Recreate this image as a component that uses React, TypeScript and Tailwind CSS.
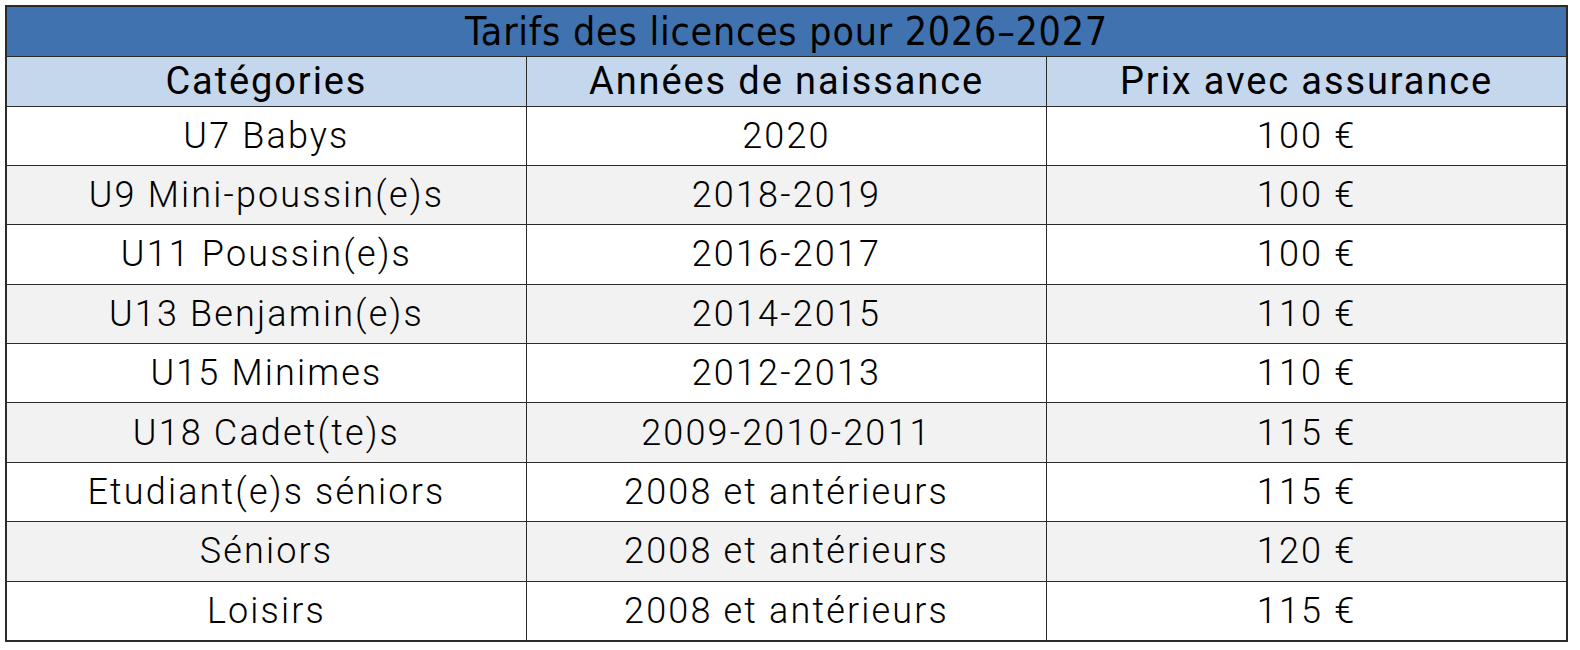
import React from 'react';

interface Row {
  category: string
  years: string
  price: string
}

const rows: Row[] = [
  { category: 'U7 Babys', years: '2020', price: '100 €' },
  { category: 'U9 Mini-poussin(e)s', years: '2018-2019', price: '100 €' },
  { category: 'U11 Poussin(e)s', years: '2016-2017', price: '100 €' },
  { category: 'U13 Benjamin(e)s', years: '2014-2015', price: '110 €' },
  { category: 'U15 Minimes', years: '2012-2013', price: '110 €' },
  { category: 'U18 Cadet(te)s', years: '2009-2010-2011', price: '115 €' },
  { category: 'Etudiant(e)s séniors', years: '2008 et antérieurs', price: '115 €' },
  { category: 'Séniors', years: '2008 et antérieurs', price: '120 €' },
  { category: 'Loisirs', years: '2008 et antérieurs', price: '115 €' },
];

const App = () => {
  return (
    <div className="w-[1580px] h-[650px] bg-white pt-[5px] pl-[5px]">
      <table className="w-[1563px] border-collapse border-2 border-[#2b2b2b] table-fixed text-black font-['Roboto',sans-serif]">
        <thead>
          {/* Title */}
          <tr className="h-[50px] bg-[#3f72af]">
            <th colSpan={3} className="border border-[#2b2b2b] p-0 text-center font-['DejaVu_Sans_Condensed','DejaVu_Sans',sans-serif] font-normal text-[39px] tracking-[0.02em] leading-none">
              Tarifs des licences pour 2026–2027
            </th>
          </tr>
          {/* Column headers */}
          <tr className="h-[50px] bg-[#c5d7ec]">
            <th className="border border-[#2b2b2b] p-0 text-center font-normal text-[38px] tracking-[0.05em] leading-none">Catégories</th>
            <th className="border border-[#2b2b2b] p-0 text-center font-normal text-[38px] tracking-[0.05em] leading-none">Années de naissance</th>
            <th className="border border-[#2b2b2b] p-0 text-center font-normal text-[38px] tracking-[0.05em] leading-none">Prix avec assurance</th>
          </tr>
        </thead>
        <tbody>
          {rows.map((row, i) => (
            <tr key={row.category} className={`h-[59.4px] ${i % 2 === 1 ? 'bg-[#f2f2f2]' : 'bg-white'}`}>
              <td className="border border-[#2b2b2b] p-0 text-center font-light text-[36px] tracking-[0.06em] leading-none">{row.category}</td>
              <td className="border border-[#2b2b2b] p-0 text-center font-light text-[36px] tracking-[0.06em] leading-none">{row.years}</td>
              <td className="border border-[#2b2b2b] p-0 text-center font-light text-[36px] tracking-[0.06em] leading-none">{row.price}</td>
            </tr>
          ))}
        </tbody>
      </table>
    </div>
  );
};

export default App;
